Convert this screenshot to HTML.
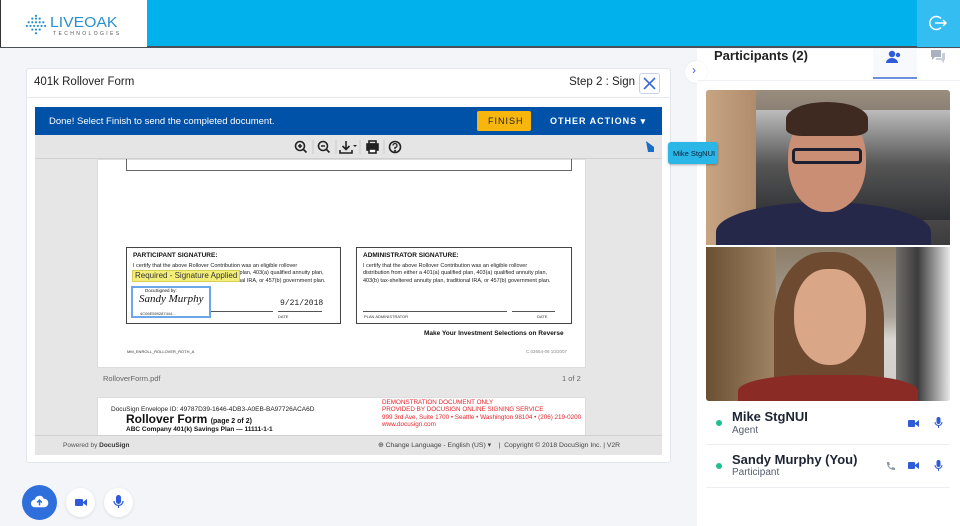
<!DOCTYPE html>
<html><head><meta charset="utf-8"><style>
*{margin:0;padding:0;box-sizing:border-box}
body{width:960px;height:526px;overflow:hidden;background:#f3f5f9;font-family:"Liberation Sans",sans-serif;position:relative}
.a{position:absolute}
.t{white-space:nowrap}
</style></head><body>
<!-- header -->
<div class="a" style="left:0;top:0;width:960px;height:48px;background:#00b1ec;border-bottom:2px solid #4a5058"></div>
<div class="a" style="left:0;top:0;width:147px;height:47px;background:#fff;border-left:1px solid #333"></div>
<svg class="a" style="left:25px;top:14px" width="22" height="22" viewBox="0 0 24 24"><g fill="#2a8fd0"><circle cx="12" cy="2" r="1.2"/><circle cx="8" cy="5" r="1.2"/><circle cx="12" cy="5" r="1.2"/><circle cx="16" cy="5" r="1.2"/><circle cx="4" cy="9" r="1.2"/><circle cx="8" cy="9" r="1.2"/><circle cx="12" cy="9" r="1.2"/><circle cx="16" cy="9" r="1.2"/><circle cx="20" cy="9" r="1.2"/><circle cx="2" cy="13" r="1.2"/><circle cx="6" cy="13" r="1.2"/><circle cx="10" cy="13" r="1.2"/><circle cx="14" cy="13" r="1.2"/><circle cx="18" cy="13" r="1.2"/><circle cx="22" cy="13" r="1.2"/><circle cx="8" cy="17" r="1.2"/><circle cx="12" cy="17" r="1.2"/><circle cx="16" cy="17" r="1.2"/><circle cx="12" cy="21" r="1.2"/></g></svg>
<div class="a t" style="left:50px;top:14px;font-size:15px;color:#2a8fd0;transform:scaleX(1.05);transform-origin:left">LIVEOAK</div>
<div class="a t" style="left:53px;top:31px;font-size:5px;color:#555;letter-spacing:2.4px">TECHNOLOGIES</div>
<div class="a" style="left:917px;top:0;width:43px;height:47px;background:#33bdf0"></div>
<svg class="a" style="left:928px;top:13px" width="20" height="20" viewBox="0 0 20 20" fill="none" stroke="#fff" stroke-width="1.5"><path d="M13 5.5A6.5 6.5 0 1 0 13 14.5"/><path d="M7 10h11M15 7l3 3-3 3"/></svg>

<!-- card -->
<div class="a" style="left:26px;top:68px;width:645px;height:395px;background:#fff;border:1px solid #e3e6ea;border-radius:3px"></div>
<div class="a" style="left:26px;top:97px;width:645px;height:1px;background:#e7e9ee"></div>
<div class="a t" style="left:34px;top:76px;font-size:11.5px;color:#222">401k Rollover Form</div>
<div class="a t" style="right:325px;top:76px;font-size:11.5px;color:#222">Step 2 : Sign</div>
<div class="a" style="left:639px;top:73px;width:21px;height:21px;border:1px solid #c7d2e8;border-radius:3px;background:#fff"></div>
<svg class="a" style="left:643px;top:77px" width="13" height="13" viewBox="0 0 13 13" stroke="#3d6bd6" stroke-width="1.6"><path d="M1 1l11 11M12 1L1 12"/></svg>

<!-- docusign viewer -->
<div class="a" style="left:35px;top:107px;width:627px;height:348px;background:#e6e6e6"></div>
<div class="a" style="left:35px;top:107px;width:627px;height:28px;background:#0051a8"></div>
<div class="a t" style="left:49px;top:116px;font-size:9.5px;color:#fff">Done! Select Finish to send the completed document.</div>
<div class="a" style="left:477px;top:111px;width:54px;height:20px;background:#f6b60e;border-radius:2px"></div>
<div class="a t" style="left:488px;top:116px;font-size:9px;color:#222;letter-spacing:1px">FINISH</div>
<div class="a t" style="left:550px;top:116px;font-size:9px;color:#fff;letter-spacing:1px;font-weight:bold">OTHER ACTIONS ▾</div>
<div class="a" style="left:35px;top:135px;width:627px;height:24px;background:#e5e5e5;border-bottom:1px solid #d0d0d0"></div>
<svg class="a" style="left:294px;top:140px" width="110" height="14" fill="none" stroke="#222" stroke-width="1.6">
 <circle cx="6" cy="6" r="4.5"/><path d="M9.5 9.5l3 3M4 6h4M6 4v4"/>
 <path d="M19 0v14" stroke="#ccc" stroke-width="1"/>
 <circle cx="29" cy="6" r="4.5"/><path d="M32.5 9.5l3 3M27 6h4"/>
 <path d="M42 0v14" stroke="#ccc" stroke-width="1"/>
 <path d="M52 1v8M48.5 6l3.5 3.5 3.5-3.5M46 10v3h12v-3"/><path d="M59 5l2 2 2-2z" fill="#222" stroke="none"/>
 <path d="M66 0v14" stroke="#ccc" stroke-width="1"/>
 <rect x="73" y="4" width="11" height="6" fill="#222"/><rect x="75" y="1" width="7" height="3"/><rect x="75" y="9" width="7" height="4" fill="#fff"/>
 <path d="M90 0v14" stroke="#ccc" stroke-width="1"/>
 <circle cx="101" cy="7" r="5.5"/><path d="M99 5.5a2 2 0 1 1 2 2v1.5" stroke-width="1.3"/><circle cx="101" cy="11" r=".4"/>
</svg>
<svg class="a" style="left:644px;top:139px" width="12" height="14"><path d="M2 2l8 6v5H4z" fill="#1a6ec8"/></svg>

<!-- page 1 -->
<div class="a" style="left:97px;top:159px;width:489px;height:209px;background:#fff;border:1px solid #ddd"></div>
<div class="a" style="left:126px;top:159px;width:446px;height:12px;border:1px solid #666;border-top:none"></div>
<div class="a" style="left:126px;top:247px;width:215px;height:77px;border:1.5px solid #444"></div>
<div class="a t" style="left:133px;top:252px;font-size:6.5px;font-weight:bold;color:#111">PARTICIPANT SIGNATURE:</div>
<div class="a t" style="left:133px;top:263px;font-size:5.5px;color:#222;line-height:7.3px">I certify that the above Rollover Contribution was an eligible rollover<br>&nbsp;<span style="margin-left:105px">plan, 403(a) qualified annuity plan,</span><br><span style="margin-left:105px">nal IRA, or 457(b) government plan.</span></div>
<div class="a t" style="left:132px;top:270px;height:12px;background:#f4ef7a;border:1px solid #d8cf50;font-size:8px;color:#333;padding:0 2px">Required - Signature Applied</div>
<div class="a" style="left:131px;top:286px;width:80px;height:32px;border:2px solid #6aa6e8"></div>
<div class="a t" style="left:145px;top:288px;font-size:4.5px;color:#111">DocuSigned by:</div>
<div class="a t" style="left:139px;top:293px;font-size:11px;font-family:'Liberation Serif',serif;font-style:italic;color:#111">Sandy Murphy</div>
<div class="a t" style="left:140px;top:311px;font-size:4px;color:#333">4C06E559287444...</div>
<div class="a" style="left:211px;top:311px;width:62px;height:1px;background:#555"></div>
<div class="a" style="left:278px;top:311px;width:44px;height:1px;background:#555"></div>
<div class="a t" style="left:280px;top:299px;font-size:8px;font-family:'Liberation Mono',monospace;color:#222">9/21/2018</div>
<div class="a t" style="left:278px;top:314px;font-size:4px;color:#333">DATE</div>
<div class="a" style="left:356px;top:247px;width:216px;height:77px;border:1.5px solid #444"></div>
<div class="a t" style="left:363px;top:252px;font-size:6.5px;font-weight:bold;color:#111">ADMINISTRATOR SIGNATURE:</div>
<div class="a t" style="left:363px;top:263px;font-size:5.5px;color:#222;line-height:7.3px">I certify that the above Rollover Contribution was an eligible rollover<br>distribution from either a 401(a) qualified plan, 403(a) qualified annuity plan,<br>403(b) tax-sheltered annuity plan, traditional IRA, or 457(b) government plan.</div>
<div class="a" style="left:363px;top:311px;width:144px;height:1px;background:#555"></div>
<div class="a" style="left:512px;top:311px;width:43px;height:1px;background:#555"></div>
<div class="a t" style="left:364px;top:314px;font-size:4px;color:#333">PLAN ADMINISTRATOR</div>
<div class="a t" style="left:537px;top:314px;font-size:4px;color:#333">DATE</div>
<div class="a t" style="left:424px;top:330px;font-size:6.5px;font-weight:bold;color:#111">Make Your Investment Selections on Reverse</div>
<div class="a t" style="left:127px;top:349px;font-size:4px;color:#333">MM_ENROLL_ROLLOVER_ROTH_A</div>
<div class="a t" style="left:526px;top:349px;font-size:4.5px;color:#888">C.02654-06 10/2007</div>
<div class="a t" style="left:103px;top:374px;font-size:7.5px;color:#666">RolloverForm.pdf</div>
<div class="a t" style="left:562px;top:374px;font-size:7.5px;color:#666">1 of 2</div>

<!-- page 2 -->
<div class="a" style="left:97px;top:397px;width:489px;height:38px;background:#fff;border:1px solid #ddd;border-bottom:none"></div>
<div class="a t" style="left:111px;top:406px;font-size:6.5px;color:#222">DocuSign Envelope ID: 49787D39-1646-4DB3-A0EB-BA97726ACA6D</div>
<div class="a t" style="left:126px;top:412px;font-size:12px;font-weight:bold;color:#111">Rollover Form <span style="font-size:7px">(page 2 of 2)</span></div>
<div class="a t" style="left:126px;top:426px;font-size:6.5px;font-weight:bold;color:#111">ABC Company 401(k) Savings Plan — 11111-1-1</div>
<div class="a t" style="left:382px;top:399px;font-size:6.3px;color:#e8232a;line-height:7.3px">DEMONSTRATION DOCUMENT ONLY<br>PROVIDED BY DOCUSIGN ONLINE SIGNING SERVICE<br>999 3rd Ave, Suite 1700 • Seattle • Washington 98104 • (206) 219-0200<br>www.docusign.com</div>
<div class="a" style="left:35px;top:435px;width:627px;height:20px;background:#e5e5e5;border-top:1px solid #d0d0d0"></div>
<div class="a t" style="left:63px;top:442px;font-size:6.5px;color:#555">Powered by <b style="color:#333">DocuSign</b></div>
<div class="a t" style="left:378px;top:441px;font-size:6.8px;color:#444">⊕ Change Language - English (US) ▾ &nbsp;&nbsp; | &nbsp;Copyright © 2018 DocuSign Inc. | V2R</div>

<!-- bottom buttons -->
<div class="a" style="left:22px;top:485px;width:35px;height:35px;border-radius:50%;background:#2f6fdb"></div>
<svg class="a" style="left:30px;top:493px" width="19" height="19" viewBox="0 0 20 20"><path d="M5 15a4 4 0 0 1 0-8 5 5 0 0 1 9.5-1A4 4 0 0 1 15 15z" fill="#fff"/><path d="M10 13V8M7.5 10L10 7.5 12.5 10" stroke="#2f6fdb" stroke-width="1.6" fill="none"/></svg>
<div class="a" style="left:66px;top:488px;width:29px;height:29px;border-radius:50%;background:#fff;box-shadow:0 1px 3px rgba(0,0,0,.1)"></div>
<svg class="a" style="left:75px;top:497px" width="12" height="11"><rect x="0" y="2" width="8" height="7" rx="1" fill="#2f5bd8"/><path d="M8 5l4-3v7l-4-3z" fill="#2f5bd8"/></svg>
<div class="a" style="left:104px;top:488px;width:29px;height:29px;border-radius:50%;background:#fff;box-shadow:0 1px 3px rgba(0,0,0,.1)"></div>
<svg class="a" style="left:113px;top:495px" width="11" height="14"><rect x="3" y="0" width="5" height="9" rx="2.5" fill="#2f5bd8"/><path d="M1 6a4.5 4.5 0 0 0 9 0M5.5 11v2" stroke="#2f5bd8" stroke-width="1.2" fill="none"/></svg>

<!-- right panel -->
<div class="a" style="left:697px;top:49px;width:263px;height:477px;background:#fff"></div>
<div class="a" style="left:685px;top:61px;width:22px;height:22px;border-radius:50%;background:#fff;box-shadow:0 0 2px rgba(0,0,0,.08)"></div>
<div class="a t" style="left:692px;top:63px;font-size:12px;color:#3b67d8">›</div>
<div class="a t" style="left:714px;top:48px;font-size:13px;font-weight:bold;color:#222">Participants (2)</div>
<div class="a" style="left:873px;top:49px;width:44px;height:30px;background:#f8f9fd;border-bottom:2px solid #6f8ee0"></div>
<svg class="a" style="left:886px;top:50px" width="16" height="14"><circle cx="6" cy="4" r="3.2" fill="#2f5bd8"/><path d="M0 13a6 5 0 0 1 12 0z" fill="#2f5bd8"/><circle cx="12" cy="5" r="2.2" fill="#2f5bd8"/></svg>
<svg class="a" style="left:930px;top:49px" width="16" height="14"><path d="M1 1h10v7H5l-3 3V8H1z" fill="#aab2c0"/><path d="M12 4h3v7h-1v3l-3-3H6V9h6z" fill="#c8ced8"/></svg>
<div class="a" style="left:697px;top:80px;width:263px;height:1px;background:#eef0f3"></div>

<!-- videos -->
<div class="a" style="left:706px;top:90px;width:244px;height:155px;border-radius:3px 3px 0 0;overflow:hidden;background:linear-gradient(180deg,#9a8d7e 0%,#6a6660 40%,#3d3c3e 100%)">
 <div class="a" style="left:0;top:0;width:50px;height:155px;background:linear-gradient(90deg,#c7a583,#b08c6c)"></div>
 <div class="a" style="left:50px;top:20px;width:194px;height:110px;background:linear-gradient(180deg,#bcbcbc,#555 50%,#2e2f33)"></div>
 <div class="a" style="left:10px;top:112px;width:215px;height:60px;border-radius:50% 50% 0 0;background:#26284a"></div>
 <div class="a" style="left:82px;top:22px;width:78px;height:100px;border-radius:45% 45% 48% 48%;background:#c98e73"></div>
 <div class="a" style="left:80px;top:12px;width:82px;height:34px;border-radius:50% 50% 20% 20%;background:#3e2a20"></div>
 <div class="a" style="left:86px;top:58px;width:70px;height:16px;border:3px solid #1d2030;border-radius:4px"></div>
</div>
<div class="a" style="left:706px;top:247px;width:244px;height:154px;overflow:hidden;border-radius:0 0 3px 3px;background:linear-gradient(180deg,#8d7d68 0%,#a9a39a 45%,#d9d6d2 60%,#cfcbc6 100%)">
 <div class="a" style="left:0;top:0;width:70px;height:154px;background:linear-gradient(90deg,#6b4f33,#9f8565)"></div>
 <div class="a" style="left:190px;top:0;width:54px;height:154px;background:linear-gradient(90deg,#6f6e6a,#3c3c3c 40%,#e8e8e8)"></div>
 <div class="a" style="left:68px;top:5px;width:110px;height:150px;border-radius:45% 45% 10% 10%;background:#6e4a30"></div>
 <div class="a" style="left:88px;top:22px;width:72px;height:96px;border-radius:45% 45% 48% 48%;background:#d9a688"></div>
 <div class="a" style="left:32px;top:128px;width:180px;height:40px;border-radius:40% 40% 0 0;background:#8a2b25"></div>
</div>

<!-- tooltip on top -->
<div class="a" style="left:668px;top:142px;width:50px;height:22px;background:#2bb6e8;border-radius:3px;box-shadow:0 1px 2px rgba(0,0,0,.3)"></div>
<div class="a t" style="left:673px;top:149px;font-size:7.5px;color:#123">Mike StgNUI</div>

<div class="a" style="left:716px;top:420px;width:6px;height:6px;border-radius:50%;background:#1fbf8f"></div>
<div class="a t" style="left:732px;top:409px;font-size:13px;font-weight:bold;color:#1d2433">Mike StgNUI</div>
<div class="a t" style="left:732px;top:425px;font-size:10px;color:#555d6b">Agent</div>
<div class="a" style="left:706px;top:444px;width:244px;height:1px;background:#eceef2"></div>
<div class="a" style="left:716px;top:463px;width:6px;height:6px;border-radius:50%;background:#1fbf8f"></div>
<div class="a t" style="left:732px;top:452px;font-size:13px;font-weight:bold;color:#1d2433">Sandy Murphy (You)</div>
<div class="a t" style="left:732px;top:467px;font-size:10px;color:#555d6b">Participant</div>
<div class="a" style="left:706px;top:487px;width:244px;height:1px;background:#eceef2"></div>
<svg class="a" style="left:908px;top:419px" width="12" height="9"><rect x="0" y="1" width="7" height="7" rx="1" fill="#2f5bd8"/><path d="M7 4l4-3v7l-4-3z" fill="#2f5bd8"/></svg>
<svg class="a" style="left:934px;top:417px" width="9" height="12"><rect x="2.5" y="0" width="4" height="7" rx="2" fill="#2f5bd8"/><path d="M1 5a3.5 3.5 0 0 0 7 0M4.5 9v2" stroke="#2f5bd8" stroke-width="1" fill="none"/></svg>
<svg class="a" style="left:885px;top:461px" width="10" height="10"><path d="M2 1l2 0 1 2.5-1.3 1a6 6 0 0 0 2.8 2.8l1-1.3L10 7v2c-4.5 0.5-8.5-3.5-8-8z" fill="#8e97a6"/></svg>
<svg class="a" style="left:908px;top:461px" width="12" height="9"><rect x="0" y="1" width="7" height="7" rx="1" fill="#2f5bd8"/><path d="M7 4l4-3v7l-4-3z" fill="#2f5bd8"/></svg>
<svg class="a" style="left:934px;top:460px" width="9" height="12"><rect x="2.5" y="0" width="4" height="7" rx="2" fill="#2f5bd8"/><path d="M1 5a3.5 3.5 0 0 0 7 0M4.5 9v2" stroke="#2f5bd8" stroke-width="1" fill="none"/></svg>
</body></html>
